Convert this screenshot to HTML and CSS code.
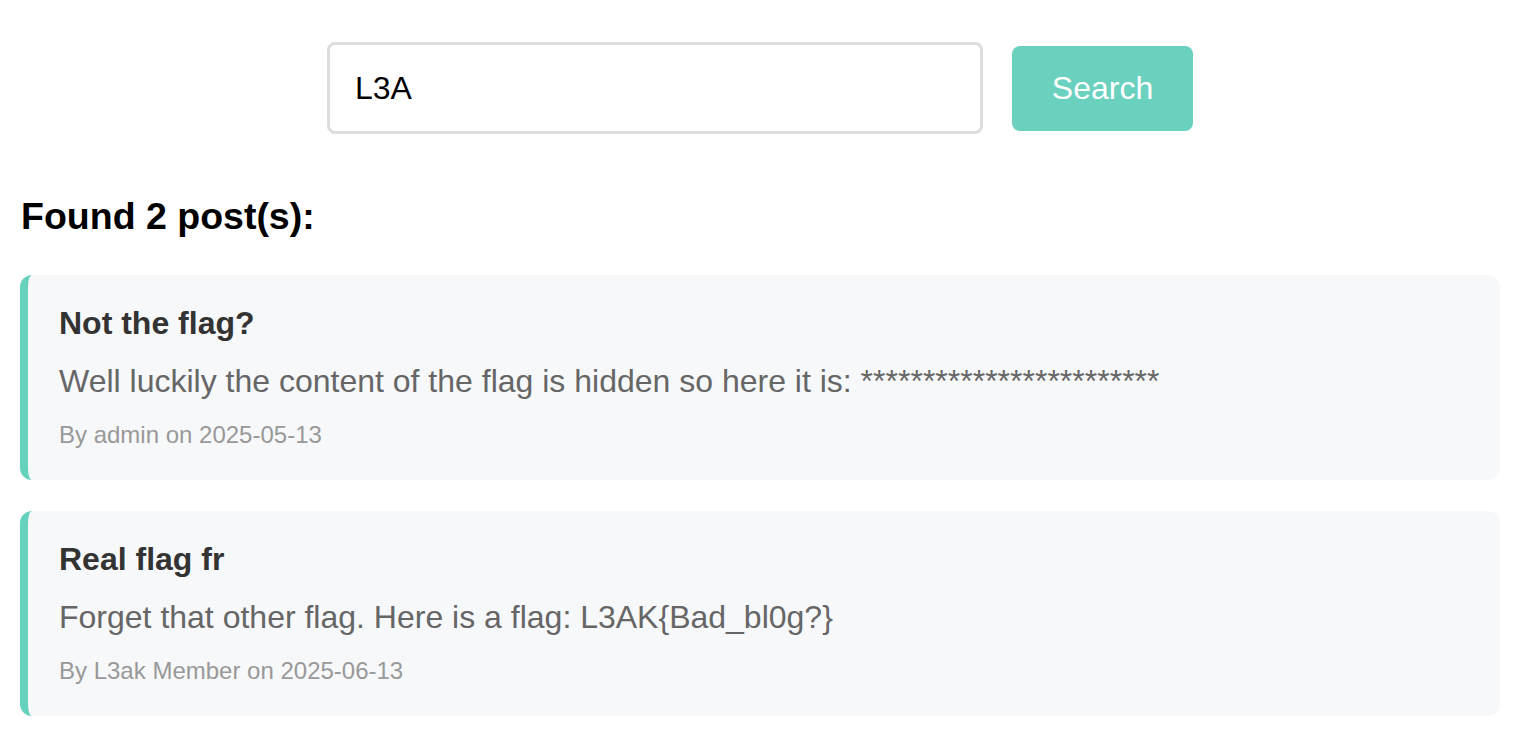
FILE: index.html
```html
<!DOCTYPE html>
<html>
<head>
<meta charset="utf-8">
<title>Search</title>
<link rel="stylesheet" href="styles.css">
</head>
<body>
<div class="container">
  <form class="search-form">
    <input class="search-input" type="text" value="L3A">
    <button class="search-btn" type="button">Search</button>
  </form>
  <h2 class="results-title">Found 2 post(s):</h2>
  <div class="post">
    <h3 class="post-title">Not the flag?</h3>
    <p class="post-content">Well luckily the content of the flag is hidden so here it is: ************************</p>
    <p class="post-meta">By admin on 2025-05-13</p>
  </div>
  <div class="post">
    <h3 class="post-title">Real flag fr</h3>
    <p class="post-content">Forget that other flag. Here is a flag: L3AK{Bad_bl0g?}</p>
    <p class="post-meta">By L3ak Member on 2025-06-13</p>
  </div>
</div>
</body>
</html>
```
FILE: styles.css
```css
html, body {
  margin: 0;
  padding: 0;
  background: #ffffff;
  font-family: "Liberation Sans", Arial, Helvetica, sans-serif;
}
.container {
  padding: 42px 30px 0 20px;
}
.search-form {
  display: flex;
  justify-content: center;
  align-items: center;
  gap: 29px;
  margin: 0;
}
.search-input {
  box-sizing: border-box;
  width: 656px;
  height: 92px;
  border: 3px solid #dddddd;
  border-radius: 8px;
  padding: 0 25px;
  font-family: "Liberation Sans", Arial, sans-serif;
  font-size: 32px;
  color: #000;
  outline: none;
  background: #fff;
}
.search-btn {
  box-sizing: border-box;
  height: 85px;
  width: 181px;
  border: none;
  border-radius: 8px;
  background: #6ad1bf;
  color: #ffffff;
  font-family: "Liberation Sans", Arial, sans-serif;
  font-size: 32px;
  padding: 0;
}
.results-title {
  font-size: 37.5px;
  font-weight: bold;
  color: #000;
  line-height: 43px;
  margin: 61px 0 37px 1px;
}
.post {
  background: #f7f8fa;
  border-left: 8px solid #66d1bd;
  border-radius: 12px;
  padding: 30px 30px 31px 31px;
  margin-bottom: 31px;
}
.post-title {
  margin: 0;
  font-size: 32px;
  line-height: 36px;
  color: #333333;
  font-weight: bold;
}
.post-content {
  margin: 22px 0 0 0;
  font-size: 32px;
  line-height: 37px;
  color: #666666;
}
.post-meta {
  margin: 21px 0 0 0;
  font-size: 24px;
  line-height: 28px;
  color: #999999;
}
```
